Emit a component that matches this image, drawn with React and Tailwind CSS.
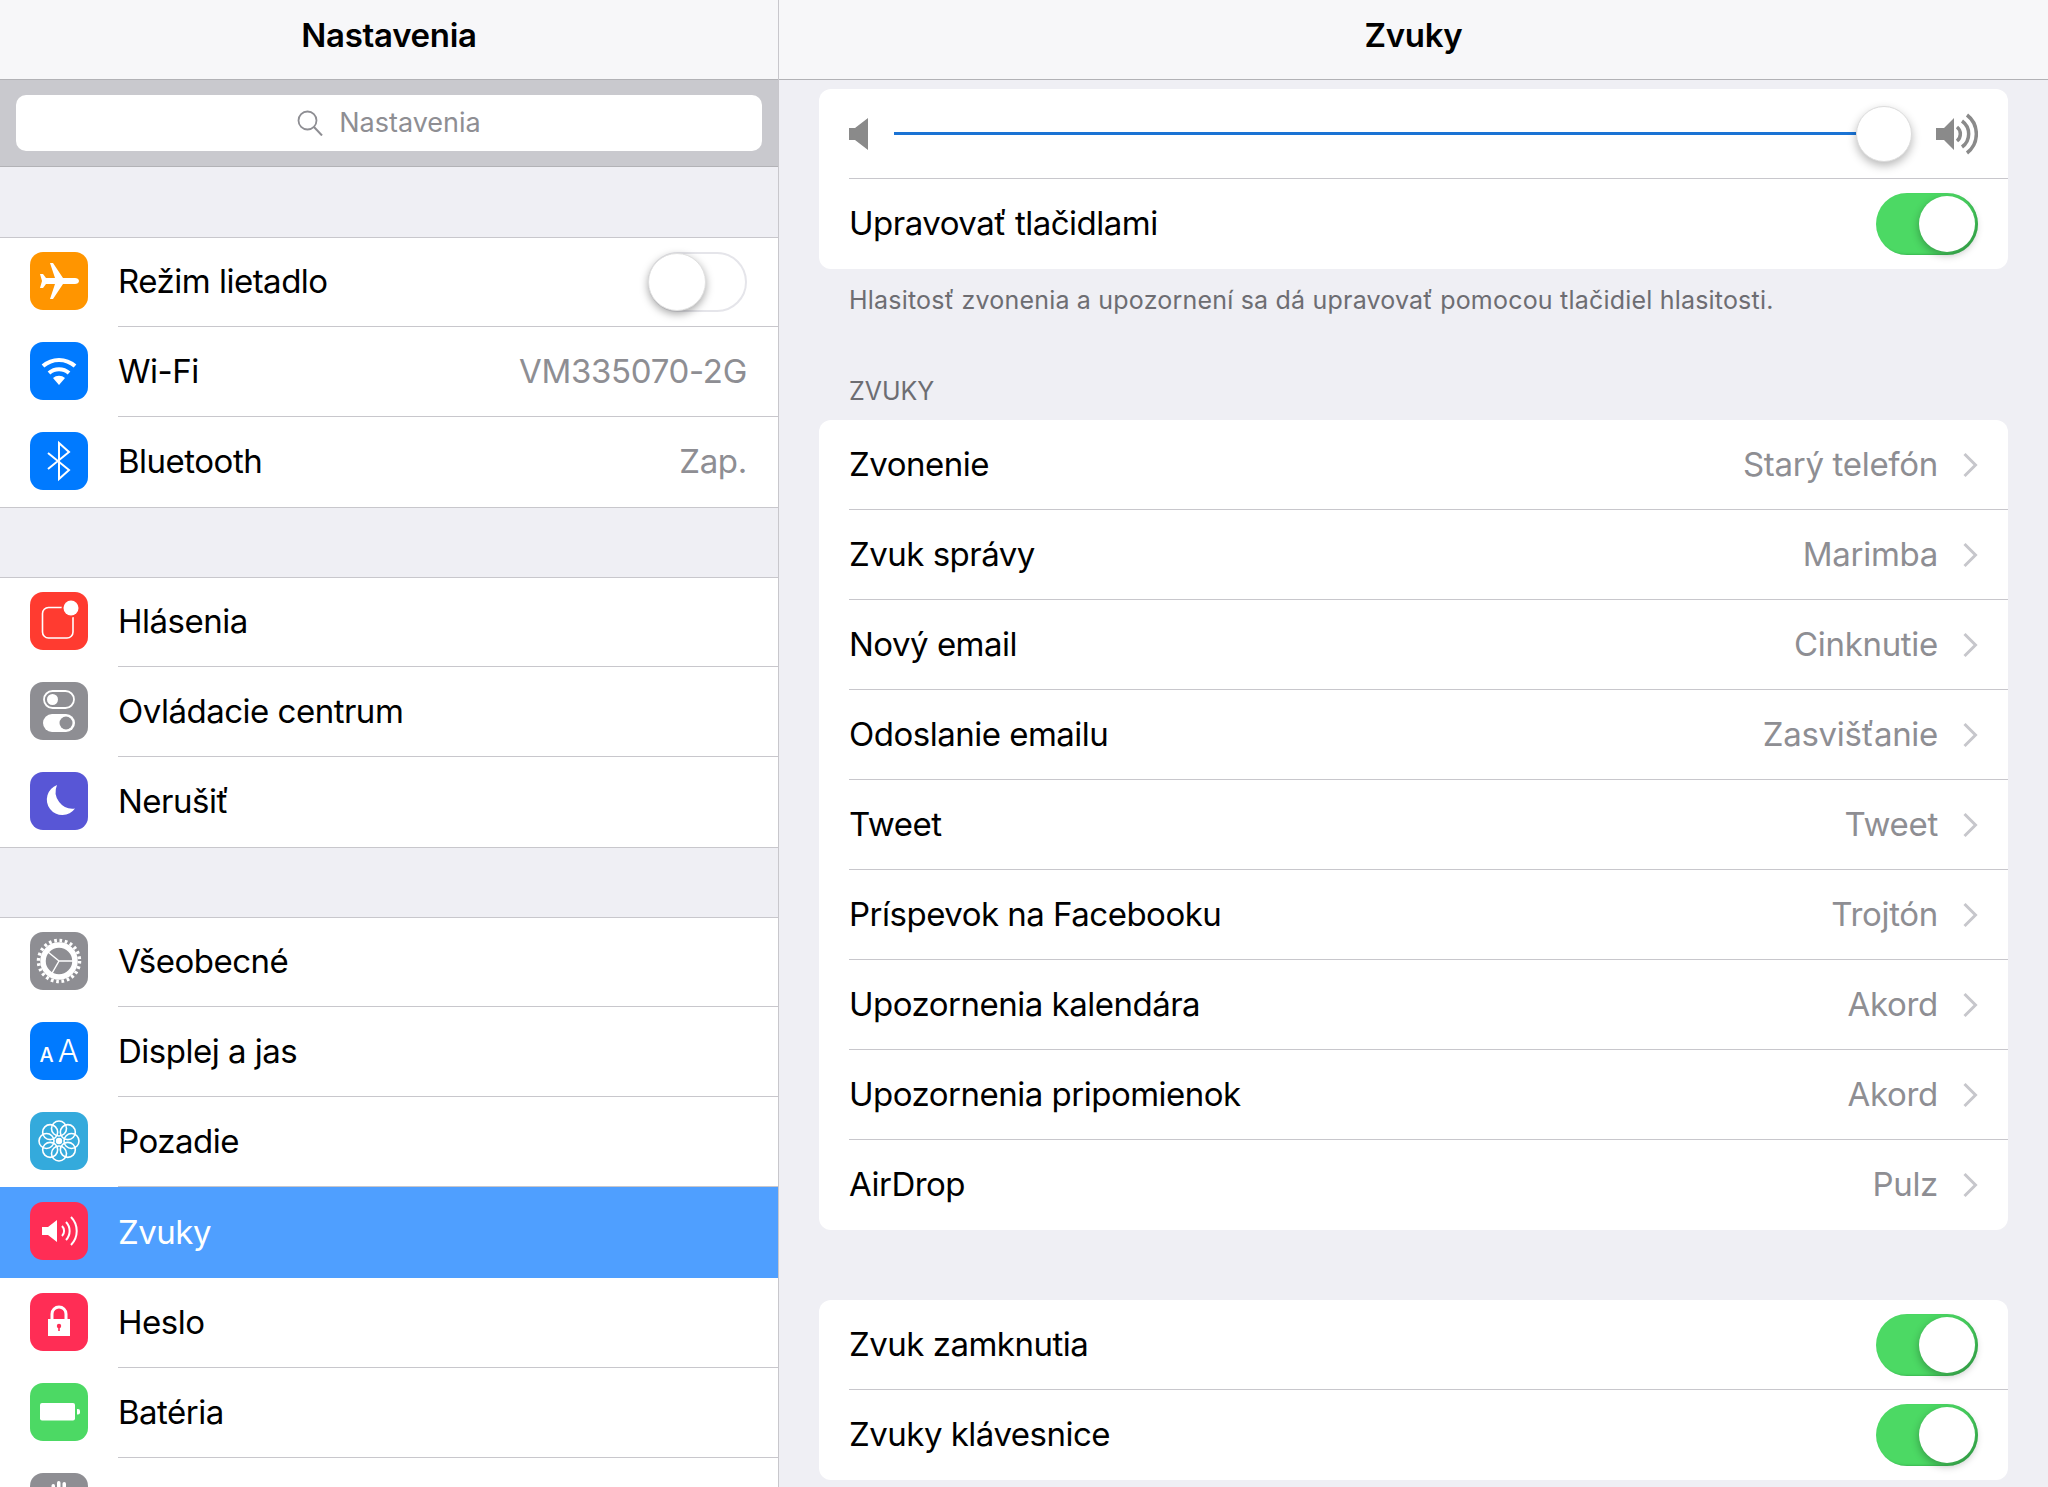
import { Fragment } from "react"

const font = { fontFamily: "Inter, sans-serif" }

const soundRows = [
  ["Zvonenie", "Starý telefón"],
  ["Zvuk správy", "Marimba"],
  ["Nový email", "Cinknutie"],
  ["Odoslanie emailu", "Zasvišťanie"],
  ["Tweet", "Tweet"],
  ["Príspevok na Facebooku", "Trojtón"],
  ["Upozornenia kalendára", "Akord"],
  ["Upozornenia pripomienok", "Akord"],
  ["AirDrop", "Pulz"],
]

function Glyph({ children }) {
  return (
    <svg width="58" height="58" viewBox="0 0 58 58" fill="none">
      {children}
    </svg>
  )
}

const PlaneGlyph = () => (
  <Glyph>
    <path d="M49 29c0-2-2-3-4-3H33L23 11h-3l5 15h-9l-3-4h-3l2 7-2 7h3l3-4h9l-5 15h3l10-15h12c2 0 4-1 4-3z" fill="#fff" />
  </Glyph>
)

const WifiGlyph = () => (
  <Glyph>
    <path d="M13 24a24 24 0 0 1 32 0" stroke="#fff" strokeWidth="4" />
    <path d="M19 31a15 15 0 0 1 20 0" stroke="#fff" strokeWidth="4" />
    <path d="M29 43l-6-7a9 9 0 0 1 12 0z" fill="#fff" />
  </Glyph>
)

const BluetoothGlyph = () => (
  <Glyph>
    <path d="M18 21L39 38 29 47V11L39 20 18 37" stroke="#fff" strokeWidth="2" />
  </Glyph>
)

const BellGlyph = () => (
  <Glyph>
    <rect x="12.5" y="15.5" width="30.5" height="30.5" rx="6" stroke="#fff" strokeWidth="1.6" />
    <circle cx="41" cy="16" r="9.5" fill="#ff3b30" />
    <circle cx="41" cy="16" r="7.5" fill="#fff" />
  </Glyph>
)

const SwitchesGlyph = () => (
  <Glyph>
    <rect x="14" y="9" width="30" height="17" rx="8.5" stroke="#fff" strokeWidth="1.8" />
    <circle cx="22.5" cy="17.5" r="5.5" fill="#fff" />
    <rect x="13" y="32" width="32" height="18" rx="9" fill="#fff" />
    <circle cx="36" cy="41" r="6.5" fill="#8e8e93" />
  </Glyph>
)

const MoonGlyph = () => (
  <Glyph>
    <path d="M27 13A15.5 15.5 0 1 0 45 36.500A17 17 0 0 1 27 13z" fill="#fff" />
  </Glyph>
)

const GearGlyph = () => (
  <Glyph>
    <circle cx="29" cy="29" r="20.500" stroke="#fff" strokeWidth="3.500" strokeDasharray="2.680 2.680" />
    <circle cx="29" cy="29" r="16" stroke="#fff" strokeWidth="5.500" />
    <path d="M29 29L18 20M29 29H44M29 29L21 43" stroke="#fff" strokeWidth="1.500" />
  </Glyph>
)

const TextSizeGlyph = () => (
  <div className="flex items-baseline gap-[4px] text-white -mt-[1px]" style={font}>
    <span className="text-[20px] leading-none font-medium">A</span>
    <span className="text-[31px] leading-none font-light">A</span>
  </div>
)

const FlowerGlyph = () => (
  <Glyph>
    {[0, 45, 90, 135, 180, 225, 270, 315].map(a => (
      <circle key={a} cx="29" cy="16.500" r="7.500" stroke="#fff" strokeWidth="1.600" transform={`rotate(${a} 29 29)`} />
    ))}
    <circle cx="29" cy="29" r="3.200" fill="#fff" />
  </Glyph>
)

const SoundGlyph = () => (
  <Glyph>
    <path d="M12 25h6l9-7v22l-9-7h-6z" fill="#fff" />
    <path d="M32 24a7 7 0 0 1 0 10M36 20a13 13 0 0 1 0 18M41 15a20 20 0 0 1 0 28" stroke="#fff" strokeWidth="2" />
  </Glyph>
)

const LockGlyph = () => (
  <Glyph>
    <path d="M22 27v-6a7 7 0 0 1 14 0v6" stroke="#fff" strokeWidth="3" />
    <rect x="18" y="26" width="22" height="17" fill="#fff" />
    <circle cx="29" cy="33" r="2.200" fill="#ff2d55" />
    <rect x="28.200" y="33" width="1.600" height="5" fill="#ff2d55" />
  </Glyph>
)

const BatteryGlyph = () => (
  <Glyph>
    <rect x="10" y="20" width="35" height="17.500" rx="2" fill="#fff" />
    <path d="M47 26h1a2 2 0 0 1 2 2v1.500a2 2 0 0 1-2 2h-1z" fill="#fff" />
  </Glyph>
)

const HandGlyph = () => (
  <Glyph>
    <rect x="21.500" y="11" width="3.500" height="22" rx="1.700" fill="#fff" />
    <rect x="27" y="8" width="3.500" height="25" rx="1.700" fill="#fff" />
    <rect x="32.500" y="9" width="3.500" height="24" rx="1.700" fill="#fff" />
  </Glyph>
)

function Toggle({ on }) {
  if (on) {
    return (
      <div className="w-[102px] h-[62px] rounded-full bg-[#4cd964] flex items-center justify-end pr-[3px] shadow-[inset_-2px_-1px_2px_rgba(30,120,50,0.35)]">
        <div className="w-[56px] h-[56px] rounded-full bg-white shadow-[0_3px_8px_rgba(0,0,0,0.3)]"></div>
      </div>
    )
  }
  return (
    <div className="w-[99px] h-[60px] rounded-full bg-white border-2 border-[#e5e5ea] flex items-center">
      <div className="w-[58px] h-[58px] -ml-[2px] rounded-full bg-white shadow-[0_3px_8px_rgba(0,0,0,0.35)] border border-[#e0e0e0]"></div>
    </div>
  )
}

function Chevron() {
  return (
    <svg width="16" height="26" viewBox="0 0 16 26" fill="none">
      <path d="M2.500 2L13.500 13 2.500 24" stroke="#c7c7cc" strokeWidth="3" />
    </svg>
  )
}

function SideRow({ icon, tile, label, value, toggle, first, last, active }) {
  const height = active ? "h-[91px] bg-[#4f9fff]" : first ? "h-[89px]" : "h-[90px]"
  const line = last || active ? "" : "border-b border-[#c8c7cc]"
  return (
    <div className={`${height} flex items-center pl-[30px]`}>
      <div className={`w-[58px] h-[58px] -mt-[3px] shrink-0 rounded-[13px] flex items-center justify-center ${tile}`}>
        {icon}
      </div>
      <div className={`flex-1 h-full ml-[30px] pr-[31px] flex items-center justify-between ${line}`}>
        <span className={`text-[33px] tracking-[-0.5px] ${active ? "text-white" : "text-black"}`}>{label}</span>
        {value && <span className="text-[33px] tracking-[-0.3px] text-[#8e8e93]">{value}</span>}
        {toggle && <Toggle />}
      </div>
    </div>
  )
}

function SideGroup({ rows }) {
  return (
    <div className="bg-white border-t border-b border-[#c8c7cc] mb-[69px]">
      {rows.map((r, i) => (
        <SideRow key={r.label} {...r} first={i === 0} last={i === rows.length - 1} />
      ))}
    </div>
  )
}

function Card({ children }) {
  return <div className="bg-white rounded-[12px] overflow-hidden ml-[40px] w-[1189px]">{children}</div>
}

function CardRow({ label, children, last }) {
  return (
    <div className="h-[90px] pl-[30px]">
      <div className={`h-full flex items-center justify-between pr-[30px] ${last ? "" : "border-b border-[#c8c7cc]"}`}>
        <span className="text-[33px] tracking-[-0.5px] text-black">{label}</span>
        {children}
      </div>
    </div>
  )
}

export default function App() {
  const group1 = [
    { label: "Režim lietadlo", tile: "bg-[#ff9500]", icon: <PlaneGlyph />, toggle: true },
    { label: "Wi-Fi", tile: "bg-[#007aff]", icon: <WifiGlyph />, value: "VM335070-2G" },
    { label: "Bluetooth", tile: "bg-[#007aff]", icon: <BluetoothGlyph />, value: "Zap." },
  ]
  const group2 = [
    { label: "Hlásenia", tile: "bg-[#ff3b30]", icon: <BellGlyph /> },
    { label: "Ovládacie centrum", tile: "bg-[#8e8e93]", icon: <SwitchesGlyph /> },
    { label: "Nerušiť", tile: "bg-[#5856d6]", icon: <MoonGlyph /> },
  ]
  const group3 = [
    { label: "Všeobecné", tile: "bg-[#8e8e93]", icon: <GearGlyph /> },
    { label: "Displej a jas", tile: "bg-[#007aff]", icon: <TextSizeGlyph /> },
    { label: "Pozadie", tile: "bg-[#34aadc]", icon: <FlowerGlyph /> },
    { label: "Zvuky", tile: "bg-[#ff2d55]", icon: <SoundGlyph />, active: true },
    { label: "Heslo", tile: "bg-[#ff2d55]", icon: <LockGlyph /> },
    { label: "Batéria", tile: "bg-[#4cd964]", icon: <BatteryGlyph /> },
    { label: "Súkromie", tile: "bg-[#8e8e93]", icon: <HandGlyph /> },
  ]

  return (
    <div className="w-[2048px] h-[1487px] overflow-hidden flex bg-[#efeff4]" style={font}>
      {/* left column */}
      <div className="w-[779px] shrink-0 border-r border-[#c8c7cc]">
        <div className="h-[80px] bg-[#f7f7f9] border-b border-[#b2b2b6] flex items-center justify-center pb-[8px]">
          <span className="text-[33px] tracking-[-0.3px] font-semibold text-black">Nastavenia</span>
        </div>
        <div className="h-[87px] bg-[#c9c9ce] border-b border-[#b2b2b6] px-[16px] pt-[15px]">
          <div className="h-[56px] bg-white rounded-[10px] flex items-center justify-center gap-[16px]">
            <svg width="26" height="26" viewBox="0 0 26 26" fill="none">
              <circle cx="10.500" cy="10.500" r="9" stroke="#8e8e93" strokeWidth="1.800" />
              <path d="M17 17l8 8.500" stroke="#8e8e93" strokeWidth="2" />
            </svg>
            <span className="text-[27px] text-[#8e8e93]">Nastavenia</span>
          </div>
        </div>
        <div className="h-[70px]"></div>
        <SideGroup rows={group1} />
        <SideGroup rows={group2} />
        <SideGroup rows={group3} />
      </div>

      {/* right column */}
      <div className="flex-1">
        <div className="h-[80px] bg-[#f7f7f9] border-b border-[#b2b2b6] flex items-center justify-center pb-[8px]">
          <span className="text-[33px] tracking-[-0.3px] font-semibold text-black">Zvuky</span>
        </div>

        <div className="h-[9px]"></div>
        <Card>
          <div className="h-[90px] pl-[30px]">
            <div className="h-full border-b border-[#c8c7cc] flex items-center pr-[30px]">
              <svg width="20" height="32" viewBox="0 0 20 32" fill="none" className="shrink-0">
                <path d="M0 10h6L19 0v32L6 22H0z" fill="#8a8a8a" />
              </svg>
              <div className="flex-1 flex items-center ml-[25px]">
                <div className="flex-1 h-[3px] bg-[#1a73d4]"></div>
                <div className="w-[56px] h-[56px] rounded-full bg-white border border-[#dcdcdc] shadow-[0_4px_10px_rgba(0,0,0,0.28)]"></div>
              </div>
              <svg width="42" height="42" viewBox="0 0 42 42" fill="none" className="ml-[24px] shrink-0">
                <path d="M0 15h8L18 5v32L8 27H0z" fill="#8a8a8a" />
                <path d="M21 14a9 9 0 0 1 0 14M26 8a16 16 0 0 1 0 26M31 2a24 24 0 0 1 0 38" stroke="#8a8a8a" strokeWidth="3.500" />
              </svg>
            </div>
          </div>
          <CardRow label="Upravovať tlačidlami" last>
            <Toggle on />
          </CardRow>
        </Card>

        <div className="pl-[70px] pt-[15px] h-[106px] text-[25px] tracking-[0.2px] leading-[32px] text-[#6d6d72]">
          Hlasitosť zvonenia a upozornení sa dá upravovať pomocou tlačidiel hlasitosti.
        </div>
        <div className="pl-[70px] h-[45px] text-[25px] leading-[32px] text-[#6d6d72]">ZVUKY</div>

        <Card>
          {soundRows.map(([label, value], i) => (
            <Fragment key={label}>
              <CardRow label={label} last={i === soundRows.length - 1}>
                <div className="flex items-center gap-[24px]">
                  <span className="text-[33px] tracking-[-0.3px] text-[#8e8e93]">{value}</span>
                  <Chevron />
                </div>
              </CardRow>
            </Fragment>
          ))}
        </Card>

        <div className="h-[70px]"></div>
        <Card>
          <CardRow label="Zvuk zamknutia">
            <Toggle on />
          </CardRow>
          <CardRow label="Zvuky klávesnice" last>
            <Toggle on />
          </CardRow>
        </Card>
      </div>
    </div>
  )
}
